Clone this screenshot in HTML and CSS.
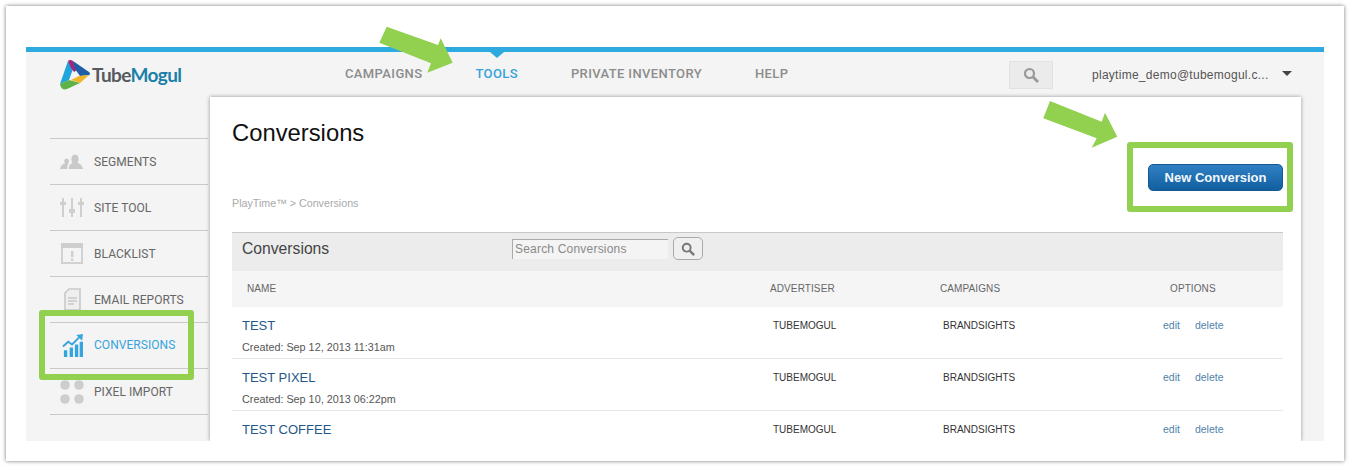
FILE: index.html
```html
<!DOCTYPE html>
<html lang="en">
<head>
  <meta charset="UTF-8" />
  <title>TubeMogul - Conversions</title>
  <link rel="stylesheet" href="styles.css">
</head>
<body>
  <div class="frame">
    <div class="app">
      <header class="topbar">
        <div class="logo">
          <svg class="logo-mark" viewBox="0 0 30 30" width="30" height="30">
            <path d="M8 1 L0 24 L9 20 L13 9z" fill="#1ea5dc"/>
            <path d="M8 1 Q10 -1 13 1 L17 10 L14 12 L11 8z" fill="#a6237e"/>
            <path d="M13 1 L29 12 Q31 14 29 15 L20 16 L15 9z" fill="#1f5fa8"/>
            <path d="M29 15 L20 23 L11 20 L19 16z" fill="#f0b429"/>
            <path d="M0 24 Q1 31 7 29 L20 23 L9 20z" fill="#5fb246"/>
          </svg>
          <span class="logo-text">Tube<span class="logo-accent">Mogul</span></span>
        </div>
        <nav class="mainnav">
          <a>CAMPAIGNS</a>
          <a class="active">TOOLS</a>
          <a>PRIVATE INVENTORY</a>
          <a>HELP</a>
        </nav>
        <div class="topsearch">
          <svg viewBox="0 0 16 16" width="16" height="16"><circle cx="6.5" cy="6.5" r="4.5" fill="none" stroke="#999" stroke-width="2.2"/><path d="M10 10 L15 15" stroke="#999" stroke-width="2.8"/></svg>
        </div>
        <div class="user">playtime_demo@tubemogul.c...</div>
        <div class="caret"></div>
      </header>

      <div class="main">
        <aside class="sidebar">
          <a class="side-item">
            <span class="side-icon"><svg viewBox="0 0 24 16" width="24" height="16"><path d="M0 15 Q1 10 5 9.5 Q3 6 6 4.5 Q9 4 9 7 Q9 9 8 9.5 L7 15z M8.5 15 Q9 10 12.5 9 Q10.5 6 12 2 Q15 -1 18 2 Q19.5 6 17.5 9 Q22 10 23 15z" fill="#c9c9c9"/></svg></span>
            <span>SEGMENTS</span>
          </a>
          <a class="side-item">
            <span class="side-icon"><svg viewBox="0 0 24 20" width="24" height="20"><path d="M3 0v19M12 0v19M21 0v19" stroke="#cfcfcf" stroke-width="2"/><path d="M0 4h6v3H0zM9 11h6v4H9zM18 4h6v3h-6z" fill="#cfcfcf"/></svg></span>
            <span>SITE TOOL</span>
          </a>
          <a class="side-item">
            <span class="side-icon"><svg viewBox="0 0 22 21" width="22" height="21"><path d="M1 1h20v19H1z" fill="none" stroke="#d2d2d2" stroke-width="2"/><path d="M0 0h22v5H0z" fill="#cfcfcf"/><path d="M10 8h2.4v6H10zM10 15.5h2.4V18H10z" fill="#cfcfcf"/></svg></span>
            <span>BLACKLIST</span>
          </a>
          <a class="side-item">
            <span class="side-icon"><svg viewBox="0 0 17 23" width="17" height="23"><path d="M5 1h11v21H1V5z" fill="#efefef" stroke="#c9c9c9" stroke-width="1.6"/><path d="M4 10h9M4 13h9M4 16h6" stroke="#c9c9c9" stroke-width="1.4"/></svg></span>
            <span>EMAIL REPORTS</span>
          </a>
          <a class="side-item active">
            <span class="side-icon"><svg viewBox="0 0 22 24" width="21" height="23"><path d="M1 13 L6.5 8 L10.5 11 L18 3.5" fill="none" stroke="#35a5dd" stroke-width="2"/><path d="M15 1 L22 0 L21 7z" fill="#35a5dd"/><path d="M2 17h3.5v7H2zM8 14h3.5v10H8zM13.5 11H17v13h-3.5zM18.5 8H22v16h-3.5z" fill="#35a5dd"/></svg></span>
            <span class="side-label">CONVERSIONS</span>
          </a>
          <a class="side-item">
            <span class="side-icon"><svg viewBox="0 0 24 24" width="24" height="24"><circle cx="5" cy="5" r="4.8" fill="#cdcdcd"/><circle cx="19" cy="5" r="4.8" fill="#cdcdcd"/><circle cx="5" cy="19" r="4.8" fill="#cdcdcd"/><circle cx="19" cy="19" r="4.8" fill="#cdcdcd"/></svg></span>
            <span>PIXEL IMPORT</span>
          </a>
        </aside>

        <section class="panel">
          <div class="panel-head">
            <h1>Conversions</h1>
            <button class="btn-new">New Conversion</button>
          </div>
          <div class="crumbs">PlayTime™ &gt; Conversions</div>

          <div class="table">
            <div class="table-title">
              <h2>Conversions</h2>
              <input class="search-input" type="text" placeholder="Search Conversions" />
              <button class="search-btn">
                <svg viewBox="0 0 16 16" width="14" height="14"><circle cx="6.5" cy="6.5" r="4.5" fill="none" stroke="#777" stroke-width="2.2"/><path d="M10 10 L15 15" stroke="#777" stroke-width="2.8"/></svg>
              </button>
            </div>
            <div class="table-cols">
              <span class="col-name">NAME</span>
              <span>ADVERTISER</span>
              <span>CAMPAIGNS</span>
              <span class="col-options">OPTIONS</span>
            </div>
            <div class="row">
              <div class="name"><a>TEST</a><small>Created: Sep 12, 2013 11:31am</small></div>
              <div class="cell">TUBEMOGUL</div>
              <div class="cell">BRANDSIGHTS</div>
              <div class="opts"><a>edit</a><a>delete</a></div>
            </div>
            <div class="row">
              <div class="name"><a>TEST PIXEL</a><small>Created: Sep 10, 2013 06:22pm</small></div>
              <div class="cell">TUBEMOGUL</div>
              <div class="cell">BRANDSIGHTS</div>
              <div class="opts"><a>edit</a><a>delete</a></div>
            </div>
            <div class="row">
              <div class="name"><a>TEST COFFEE</a></div>
              <div class="cell">TUBEMOGUL</div>
              <div class="cell">BRANDSIGHTS</div>
              <div class="opts"><a>edit</a><a>delete</a></div>
            </div>
          </div>
        </section>
      </div>
    </div>
  </div>

  <!-- green callouts drawn over the screenshot -->
  <div class="callout callout-side"></div>
  <div class="callout callout-new"></div>
  <svg class="arrows" viewBox="0 0 1350 467" width="1350" height="467">
    <path d="M386.7 26.7 L379.3 42.7 L431 63.3 L427.3 72.7 L452.7 62.7 L440.7 38.3 L438 45z" fill="#92d050"/>
    <path d="M1050 101 L1043.3 118.3 L1096.7 138.3 L1091.7 147.7 L1117.3 136.7 L1105 112.7 L1101.7 121.7z" fill="#92d050"/>
  </svg>
</body>
</html>
```

FILE: styles.css
```css
* {
  box-sizing: border-box;
}

body {
  margin: 0;
  height: 467px;
  overflow: hidden;
  background: #fff;
  font-family: "Liberation Sans", Arial, sans-serif;
  color: #444;
}

.frame {
  margin: 6px 0 0 6px;
  width: 1338px;
  height: 455px;
  padding: 41px 20px 20px;
  background: #fff;
  box-shadow: 0 0 4px rgba(0, 0, 0, 0.55);
}

.app {
  height: 394px;
  overflow: hidden;
  background: #f4f4f4;
  border-top: 5px solid #2dabe0;
}

/* top bar */
.topbar {
  display: flex;
  align-items: center;
  height: 45px;
}

.logo {
  display: flex;
  align-items: center;
  gap: 2px;
  width: 319px;
  padding-left: 34px;
}

.logo-text {
  font-family: Lato, sans-serif;
  font-size: 19px;
  font-weight: 700;
  letter-spacing: -0.63px;
  color: #555a60;
}

.logo-accent {
  color: #1b7fa9;
}

.mainnav {
  display: flex;
  gap: 53px;
  width: 664px;
  margin-top: -2px;
}

.mainnav a {
  position: relative;
  font-family: Roboto, sans-serif;
  font-size: 13px;
  font-weight: 500;
  letter-spacing: 0.38px;
  color: #8c8c8c;
}

.mainnav a.active {
  color: #36a3dc;
}

.mainnav a.active::before {
  content: "";
  position: absolute;
  left: 50%;
  top: -14px;
  margin-left: -7px;
  border-left: 7px solid transparent;
  border-right: 7px solid transparent;
  border-top: 6px solid #2dabe0;
}

.topsearch {
  display: flex;
  align-items: center;
  justify-content: center;
  width: 44px;
  height: 28px;
  margin-top: 1px;
  background: #ebebeb;
  border: 1px solid #e2e2e2;
}

.user {
  margin-left: 39px;
  font-size: 12px;
  letter-spacing: 0.27px;
  color: #555;
}

.caret {
  margin: -3px 0 0 13px;
  border-left: 5px solid transparent;
  border-right: 5px solid transparent;
  border-top: 5px solid #444;
}

.main {
  display: flex;
  height: 344px;
}

/* left menu */
.sidebar {
  width: 184px;
  padding: 41px 2px 0 24px;
}

.side-item {
  display: flex;
  align-items: center;
  height: 46px;
  border-top: 1px solid #c9c9c9;
  font-family: Roboto, sans-serif;
  font-size: 12px;
  letter-spacing: 0.05px;
  color: #666;
}

.side-item:last-child {
  height: 47px;
  border-bottom: 1px solid #c9c9c9;
}

.side-icon {
  display: flex;
  justify-content: center;
  flex: none;
  width: 44px;
}

.side-item.active {
  color: #36a3dc;
}

.side-label {
  margin-top: -2px;
}

/* content panel */
.panel {
  width: 1091px;
  padding: 22px 18px 0 22px;
  background: #fff;
  box-shadow: 0 0 4px rgba(0, 0, 0, 0.4);
}

.panel-head {
  display: flex;
  justify-content: space-between;
  height: 77px;
}

h1 {
  margin: 0;
  font-size: 23.8px;
  font-weight: 400;
  line-height: 28px;
  color: #111;
}

.btn-new {
  width: 135px;
  height: 27px;
  margin-top: 45px;
  padding: 0;
  background: linear-gradient(#2f80c4, #125f9f);
  border: 1px solid #15598f;
  border-radius: 5px;
  font-family: inherit;
  font-size: 13px;
  font-weight: 700;
  color: #f2f7fb;
}

.crumbs {
  height: 36px;
  font-size: 10.7px;
  line-height: 14px;
  color: #a9a9a9;
}

.table-title {
  display: flex;
  align-items: center;
  height: 39px;
  padding: 0 0 7px 10px;
  background: #ececec;
  border-top: 1px solid #c8c8c8;
}

h2 {
  width: 270px;
  margin: 0;
  font-size: 15.7px;
  font-weight: 400;
  color: #444;
}

.search-input {
  width: 156px;
  height: 20px;
  padding: 0 2px;
  background: #f4f4f4;
  border: 0;
  border-top: 1px solid #aaa;
  border-left: 1px solid #aaa;
  font-family: inherit;
  font-size: 12px;
  outline: none;
}

.search-input::placeholder {
  color: #8a8a8a;
  letter-spacing: 0.2px;
}

.search-btn {
  display: flex;
  align-items: center;
  justify-content: center;
  width: 30px;
  height: 23px;
  margin-left: 5px;
  padding: 0;
  background: #efefef;
  border: 1px solid #aaa;
  border-radius: 5px;
}

.table-cols,
.row {
  display: grid;
  grid-template-columns: 538px 170px 223px 1fr;
}

.table-cols {
  align-items: center;
  height: 36px;
  padding-bottom: 2px;
  background: #f5f5f5;
  font-size: 10px;
  letter-spacing: 0.1px;
  color: #666;
}

.col-name {
  padding-left: 15px;
}

.col-options {
  padding-left: 7px;
}

.row {
  height: 52px;
  padding-top: 11px;
  border-bottom: 1px solid #e8e8e8;
  font-size: 10px;
  line-height: 16px;
}

.name a {
  display: block;
  padding-left: 10px;
  font-size: 13px;
  color: #25578a;
}

.name small {
  display: block;
  margin-top: 5px;
  padding-left: 10px;
  font-size: 10.8px;
  color: #555;
}

.cell {
  padding-left: 3px;
  color: #333;
}

.opts {
  margin-top: -1px;
  font-size: 10.5px;
}

.opts a {
  margin-right: 15px;
  color: #4f83ab;
}

/* annotations */
.callout {
  position: absolute;
  border: 6px solid #92d050;
  border-radius: 3px;
}

.callout-side {
  left: 39px;
  top: 310px;
  width: 155px;
  height: 70px;
}

.callout-new {
  left: 1127px;
  top: 142px;
  width: 166px;
  height: 70px;
}

.arrows {
  position: absolute;
  left: 0;
  top: 0;
}
```
